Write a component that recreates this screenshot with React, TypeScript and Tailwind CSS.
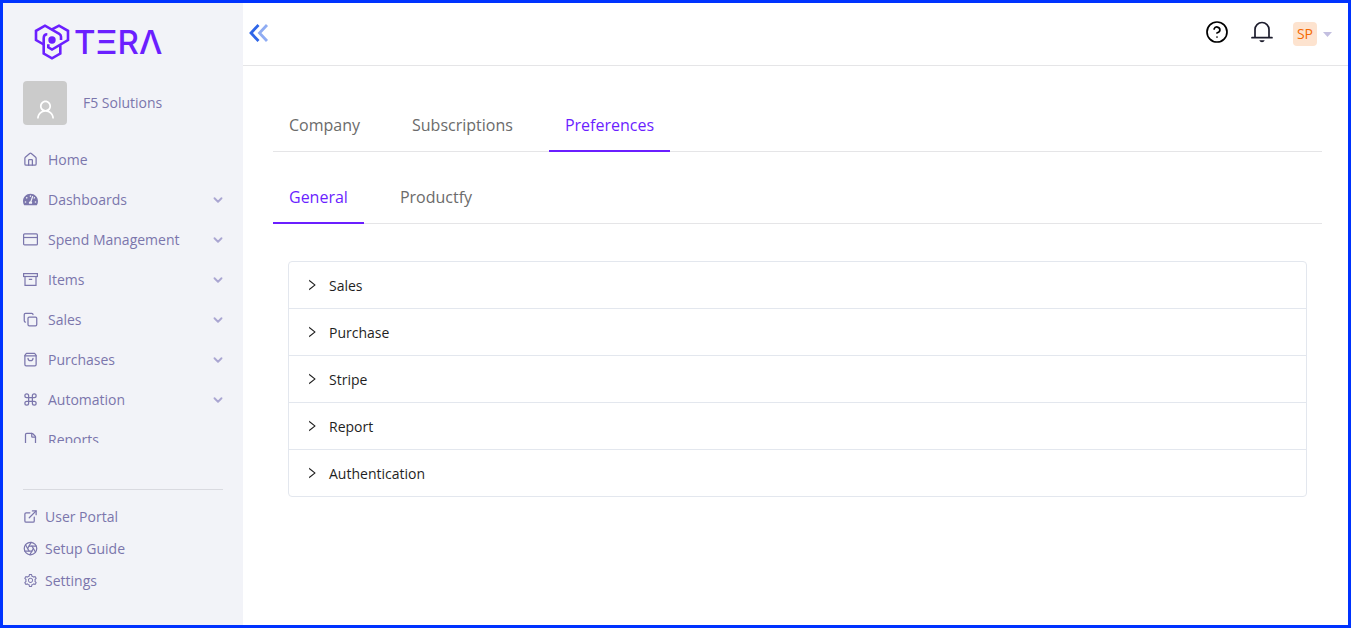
import type { ReactNode } from "react";
import {
  Aperture,
  ChevronDown,
  CircleQuestionMark,
  Command,
  Copy,
  ExternalLink,
  File,
  House,
} from "lucide-react";
import { AiOutlineRight, AiOutlineSetting, AiOutlineUser } from "react-icons/ai";
import { FaTachometerAlt } from "react-icons/fa";

type MenuItem = {
  label: string;
  icon: ReactNode;
  expandable?: boolean;
};

const CardIcon = () => (
  <svg width="15" height="15" viewBox="0 0 15 15" fill="none" stroke="currentColor" strokeWidth="1.200">
    <rect x="0.600" y="1.900" width="13.800" height="11" rx="1" />
    <path d="M.6 5.500h13.800" />
  </svg>
);

const ArchiveIcon = () => (
  <svg width="15" height="15" viewBox="0 0 15 15" fill="none" stroke="currentColor" strokeWidth="1.200">
    <rect x="0.600" y="1.600" width="13.800" height="2.900" />
    <path d="M2 4.500v8.900h11V4.500M5.800 7.400h3.400" />
  </svg>
);

const BagIcon = () => (
  <svg width="15" height="15" viewBox="0 0 24 24" fill="none" stroke="currentColor" strokeWidth="2" strokeLinecap="round" strokeLinejoin="round">
    <path d="M5.500 2h13L21 5.500V20a2 2 0 0 1-2 2H5a2 2 0 0 1-2-2V5.500z" />
    <path d="M3 6h18" />
    <path d="M8 10c0 5.300 8 5.300 8 0" />
  </svg>
);

const BellIcon = () => (
  <svg width="22" height="22" viewBox="0 0 22 22" fill="none" stroke="currentColor" strokeWidth="1.700">
    <path d="M4 16.500V8.500a7 7 0 0 1 14 0v8" />
    <path d="M1 16.700h20" strokeLinecap="round" />
    <path d="M8.300 19.300c.8 2.600 4.600 2.600 5.400 0z" fill="currentColor" stroke="none" />
  </svg>
);

const LogoMark = () => (
  <svg width="36" height="36" viewBox="0 0 36 36" fill="none" stroke="currentColor" strokeWidth="2.600">
    <path d="M9.700 20.500 2 16V6.800L11 1.700l14.300 8.100q1.700 1 1.700 3V16" />
    <path d="M17.500 5.600 25 1.700l9 5.100V16l-16 9.500-3.700-2.200v-3" />
    <path d="M13.300 10.200q-3.600 0-3.600 4V29.600l8.300 4.700 8.300-4.700v-8.400" />
    <circle cx="18" cy="16" r="3.700" fill="currentColor" stroke="none" />
  </svg>
);

const menu: MenuItem[] = [
  { label: "Home", icon: <House size={15} /> },
  { label: "Dashboards", icon: <FaTachometerAlt size={15} />, expandable: true },
  { label: "Spend Management", icon: <CardIcon />, expandable: true },
  { label: "Items", icon: <ArchiveIcon />, expandable: true },
  { label: "Sales", icon: <Copy size={15} />, expandable: true },
  { label: "Purchases", icon: <BagIcon />, expandable: true },
  { label: "Automation", icon: <Command size={15} />, expandable: true },
  { label: "Reports", icon: <File size={15} /> },
];

const footerLinks: MenuItem[] = [
  { label: "User Portal", icon: <ExternalLink size={15} /> },
  { label: "Setup Guide", icon: <Aperture size={15} /> },
  { label: "Settings", icon: <AiOutlineSetting size={15} /> },
];

const sections = ["Sales", "Purchase", "Stripe", "Report", "Authentication"];

const Sidebar = () => (
  <aside className="flex w-60 shrink-0 flex-col bg-[#f2f3f8] px-5 text-[#7b76ac]">
    <a href="#" aria-label="TERA" className="mt-[21px] ml-[11px] flex h-9 items-center gap-1 text-[#6b1fff]">
      <LogoMark />
      <span className="font-[Inter] text-[33px] leading-9 font-medium">TΞRΛ</span>
    </a>

    <div className="mt-[21px] flex items-center gap-4">
      <div className="flex size-11 items-end justify-center rounded bg-[#cbcbcb] pb-1 text-white">
        <AiOutlineUser size={23} />
      </div>
      <span>F5 Solutions</span>
    </div>

    <nav className="mt-[15px] min-h-0 flex-1 overflow-hidden">
      {menu.map((item) => (
        <a key={item.label} href="#" className="flex h-10 items-center">
          <span className="mr-[10px] w-[15px] pb-0.5">{item.icon}</span>
          <span className="flex-1">{item.label}</span>
          {item.expandable && <ChevronDown size={14} strokeWidth={3.2} className="-mr-0.5 text-[#aaa6d2]" />}
        </a>
      ))}
    </nav>

    <div className="mt-[46px] h-[136px] border-t border-[#d9dae0] pt-[11px]">
      {footerLinks.map((item) => (
        <a key={item.label} href="#" className="flex h-8 items-center gap-[7px]">
          <span className="w-[15px] pb-0.5">{item.icon}</span>
          {item.label}
        </a>
      ))}
    </div>
  </aside>
);

const Header = () => (
  <header className="flex h-[63px] items-center justify-between border-b border-[#e5e5e7] pr-4 pl-[6px]">
    <button type="button" aria-label="Collapse menu" className="pb-0.5">
      <svg width="20" height="20" viewBox="0 0 20 20" fill="none" strokeWidth="2.800">
        <path d="M9.500 2 2 10l7.500 8" stroke="#2f66e8" />
        <path d="M18 2l-7.500 8 7.500 8" stroke="#8facf3" />
      </svg>
    </button>
    <div className="flex items-center">
      <button type="button" aria-label="Help" className="pb-1 text-black">
        <CircleQuestionMark size={24} strokeWidth={1.7} />
      </button>
      <button type="button" aria-label="Notifications" className="ml-[22px] pb-1 text-[#1c1c2c]">
        <BellIcon />
      </button>
      <button type="button" className="ml-5 flex items-center gap-[6px]">
        <span className="flex size-6 items-center justify-center rounded bg-[#fde3cf] text-sm text-[#f56a00]">SP</span>
        <svg width="9" height="5" viewBox="0 0 9 5" fill="#c3bfe0">
          <path d="M0 0h9L4.500 5z" />
        </svg>
      </button>
    </div>
  </header>
);

type TabsProps = {
  tabs: string[];
  active: string;
};

const Tabs = ({ tabs, active }: TabsProps) => (
  <div role="tablist" className="flex gap-5 border-b border-[#e5e5e7] text-base">
    {tabs.map((tab) => (
      <button
        key={tab}
        type="button"
        role="tab"
        aria-selected={tab === active}
        className={
          tab === active
            ? "-mb-px h-[54px] border-b-2 border-[#6b1fff] px-4 pt-0.5 font-medium text-[#6b1fff]"
            : "-mb-px h-[54px] border-b-2 border-transparent px-4 pt-0.5 text-[#6b6b6b]"
        }
      >
        {tab}
      </button>
    ))}
  </div>
);

const App = () => {
  return (
    <div className="flex h-screen border-[3px] border-[#0033ff] bg-white font-['Open_Sans',sans-serif] text-sm">
      <Sidebar />
      <div className="flex min-w-0 flex-1 flex-col">
        <Header />
        <main className="pt-8 pr-[26px] pl-[30px]">
          <Tabs tabs={["Company", "Subscriptions", "Preferences"]} active="Preferences" />
          <div className="mt-[18px]">
            <Tabs tabs={["General", "Productfy"]} active="General" />
          </div>

          {/* Preference groups */}
          <div className="mx-[15px] mt-[37px] rounded border border-[#e3e7ee]">
            {sections.map((section) => (
              <button
                key={section}
                type="button"
                aria-expanded={false}
                className="flex h-[47px] w-full items-center gap-[10px] border-b border-[#e3e7ee] px-4 text-left text-[#1f1f1f] last:h-[46px] last:border-b-0"
              >
                <AiOutlineRight size={14} />
                <span className="pt-0.5">{section}</span>
              </button>
            ))}
          </div>
        </main>
      </div>
    </div>
  );
};

export default App;
